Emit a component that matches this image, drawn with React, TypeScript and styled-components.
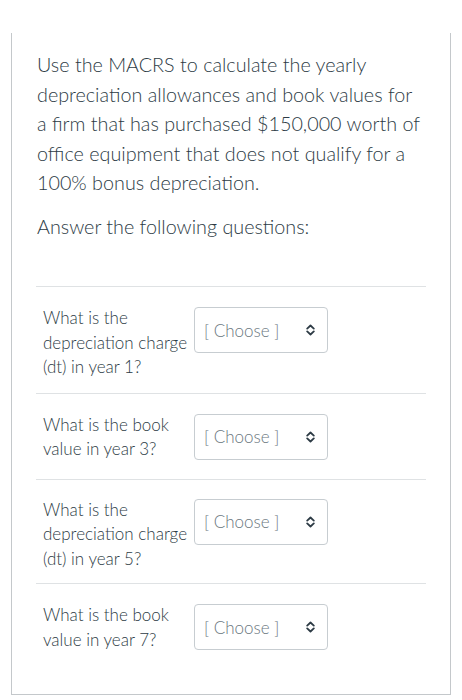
import styled, { createGlobalStyle } from "styled-components";

const GlobalStyle = createGlobalStyle`
  html, body {
    margin: 0;
    padding: 0;
    background: #ffffff;
  }
  body {
    font-family: Lato, "Open Sans", "Liberation Sans", sans-serif;
    font-weight: 300;
    color: #2d3b45;
  }
`;

const Page = styled.div`
  padding: 33px 11px 0 11px;
  width: 440px;
`;

const Card = styled.div`
  border: 1px solid #c4c8cb;
  border-top: 0;
  padding: 17px 24px 24px 25px;
`;

const Prompt = styled.p`
  margin: 0 0 14px;
  max-width: 384px;
  font-size: 19.75px;
  line-height: 29.5px;
`;

const Questions = styled.div`
  margin-top: 45px;
  margin-left: -1px;
  border-top: 1px solid #dfe2e4;
`;

const Row = styled.div<{ top: number; bottom: number }>`
  display: grid;
  grid-template-columns: 151px 134px;
  align-items: start;
  padding: ${(p) => p.top}px 7px ${(p) => p.bottom}px;
  border-bottom: 1px solid #dfe2e4;
  &:last-child {
    border-bottom: 0;
  }
`;

const Label = styled.div`
  font-size: 17px;
  line-height: 24.5px;
`;

const Select = styled.div`
  box-sizing: border-box;
  height: 46px;
  margin-top: 1px;
  display: flex;
  align-items: center;
  justify-content: space-between;
  padding: 0 12px 0 9px;
  border: 1px solid #c7cdd1;
  border-radius: 4px;
  background: #ffffff;
  font-size: 17px;
  color: #6b7780;
`;

function UpDown() {
  return (
    <svg width="9" height="12" viewBox="0 0 9 12" fill="none">
      <path d="M1.2 4.6 L4.5 1.5 L7.8 4.6" stroke="#2d3b45" strokeWidth="1.8" strokeLinecap="round" strokeLinejoin="round" />
      <path d="M1.2 7.4 L4.5 10.5 L7.8 7.4" stroke="#2d3b45" strokeWidth="1.8" strokeLinecap="round" strokeLinejoin="round" />
    </svg>
  );
}

const questions = [
  { text: "What is the depreciation charge (dt) in year 1?", top: 19, bottom: 13 },
  { text: "What is the book value in year 3?", top: 19, bottom: 17 },
  { text: "What is the depreciation charge (dt) in year 5?", top: 18, bottom: 12 },
  { text: "What is the book value in year 7?", top: 19, bottom: 18 },
];

export default function App() {
  return (
    <>
      <GlobalStyle />
      <Page>
        <Card>
          <Prompt>
            Use the MACRS to calculate the yearly depreciation allowances and book values for a firm that has
            purchased $150,000 worth of office equipment that does not qualify for a 100% bonus depreciation.
          </Prompt>
          <Prompt>Answer the following questions:</Prompt>
          <Questions>
            {questions.map((q) => (
              <Row key={q.text} top={q.top} bottom={q.bottom}>
                <Label>{q.text}</Label>
                <Select>
                  <span>[ Choose ]</span>
                  <UpDown />
                </Select>
              </Row>
            ))}
          </Questions>
        </Card>
      </Page>
    </>
  );
}
